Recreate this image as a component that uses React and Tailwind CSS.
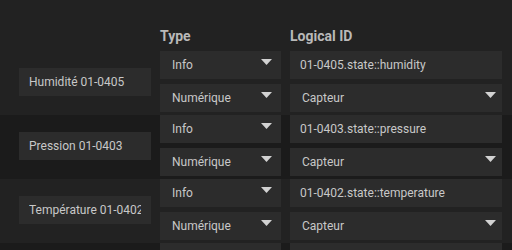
const rows = [
  { name: 'Humidité 01-0405', type: 'Info', kind: 'Numérique', id: '01-0405.state::humidity', role: 'Capteur' },
  { name: 'Pression 01-0403', type: 'Info', kind: 'Numérique', id: '01-0403.state::pressure', role: 'Capteur' },
  { name: 'Température 01-0402', type: 'Info', kind: 'Numérique', id: '01-0402.state::temperature', role: 'Capteur' },
  { name: 'Luminosité 01-0401', type: 'Info', kind: 'Numérique', id: '01-0401.state::luminosity', role: 'Capteur' },
];

function Arrow({ className }) {
  return (
    <svg width="11" height="6" viewBox="0 0 11 6" className={className}>
      <path d="M0 0 L11 0 L5.5 6 Z" fill="#d2d2d2" />
    </svg>
  );
}

function Select({ value, arrowClass }) {
  return (
    <div className="relative h-[28px] bg-[#2c2c2c] flex items-center pl-[12px] text-[12px] text-[#c8c8c8]">
      {value}
      <Arrow className={`absolute top-[8px] ${arrowClass}`} />
    </div>
  );
}

function Field({ value, className }) {
  return (
    <input
      readOnly
      value={value}
      className={`h-[28px] bg-[#2c2c2c] px-[10px] text-[12px] text-[#c8c8c8] outline-none ${className}`}
    />
  );
}

export default function App() {
  return (
    <div
      className="w-[512px] h-[250px] overflow-hidden bg-[#222222]"
      style={{ fontFamily: 'Roboto, "Noto Sans", sans-serif' }}
    >
      <div className="flex h-[51px] pt-[26px] text-[14px] leading-[20px] font-bold text-[#b9b9b9]">
        <div className="w-[160px]" />
        <div className="w-[121px]">Type</div>
        <div className="ml-[9px]">Logical ID</div>
      </div>
      {rows.map((r, i) => (
        <div key={r.name} className={`flex pb-[3px] ${i % 2 ? 'bg-[#1b1b1b]' : ''}`}>
          <div className="w-[160px] pl-[19px] flex items-center">
            <Field value={r.name} className="w-[132px]" />
          </div>
          <div className="w-[121px] flex flex-col gap-[5px]">
            <Select value={r.type} arrowClass="right-[9px]" />
            <Select value={r.kind} arrowClass="right-[9px]" />
          </div>
          <div className="w-[212px] ml-[9px] flex flex-col gap-[5px]">
            <Field value={r.id} className="w-[212px]" />
            <Select value={r.role} arrowClass="right-[6px]" />
          </div>
        </div>
      ))}
    </div>
  );
}
